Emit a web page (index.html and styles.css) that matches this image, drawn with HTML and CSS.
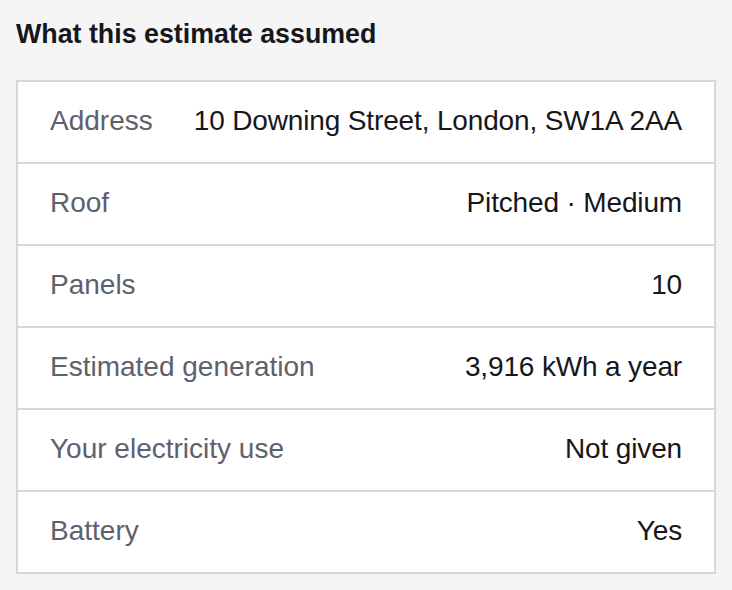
FILE: index.html
```html
<!DOCTYPE html>
<html lang="en">

<head>
  <meta charset="UTF-8">
  <meta name="viewport" content="width=device-width, initial-scale=1.0">
  <title>What this estimate assumed</title>
  <link rel="stylesheet" href="styles.css">
</head>

<body>
  <section class="assumptions">
    <h2 class="title">What this estimate assumed</h2>
    <dl class="list">
      <div class="row">
        <dt>Address</dt>
        <dd>10 Downing Street, London, SW1A 2AA</dd>
      </div>
      <div class="row">
        <dt>Roof</dt>
        <dd>Pitched · Medium</dd>
      </div>
      <div class="row">
        <dt>Panels</dt>
        <dd>10</dd>
      </div>
      <div class="row">
        <dt>Estimated generation</dt>
        <dd>3,916 kWh a year</dd>
      </div>
      <div class="row">
        <dt>Your electricity use</dt>
        <dd>Not given</dd>
      </div>
      <div class="row">
        <dt>Battery</dt>
        <dd>Yes</dd>
      </div>
    </dl>
  </section>
</body>

</html>
```

FILE: styles.css
```css
html,
body {
  margin: 0;
  background-color: #f5f5f6;
}

body {
  font-family: "Liberation Sans", Arial, sans-serif;
  color: #16171b;
}

.assumptions {
  padding: 18px 16px 0;
}

.title {
  margin: 0 0 30px;
  font-size: 26.8px;
  line-height: 32px;
  font-weight: 700;
}

.list {
  margin: 0;
  width: 696px;
  background-color: #fff;
  border: 2px solid #d6d7d9;
}

.row {
  display: flex;
  align-items: center;
  justify-content: space-between;
  gap: 24px;
  height: 80px;
  padding: 0 32px 3px;
  box-sizing: border-box;
  font-size: 28px;
}

.row + .row {
  height: 82px;
  border-top: 2px solid #d6d7d9;
}

.row dt {
  color: #5d616d;
}

.row dd {
  margin: 0;
  text-align: right;
  letter-spacing: -0.15px;
  color: #16171b;
}
```
